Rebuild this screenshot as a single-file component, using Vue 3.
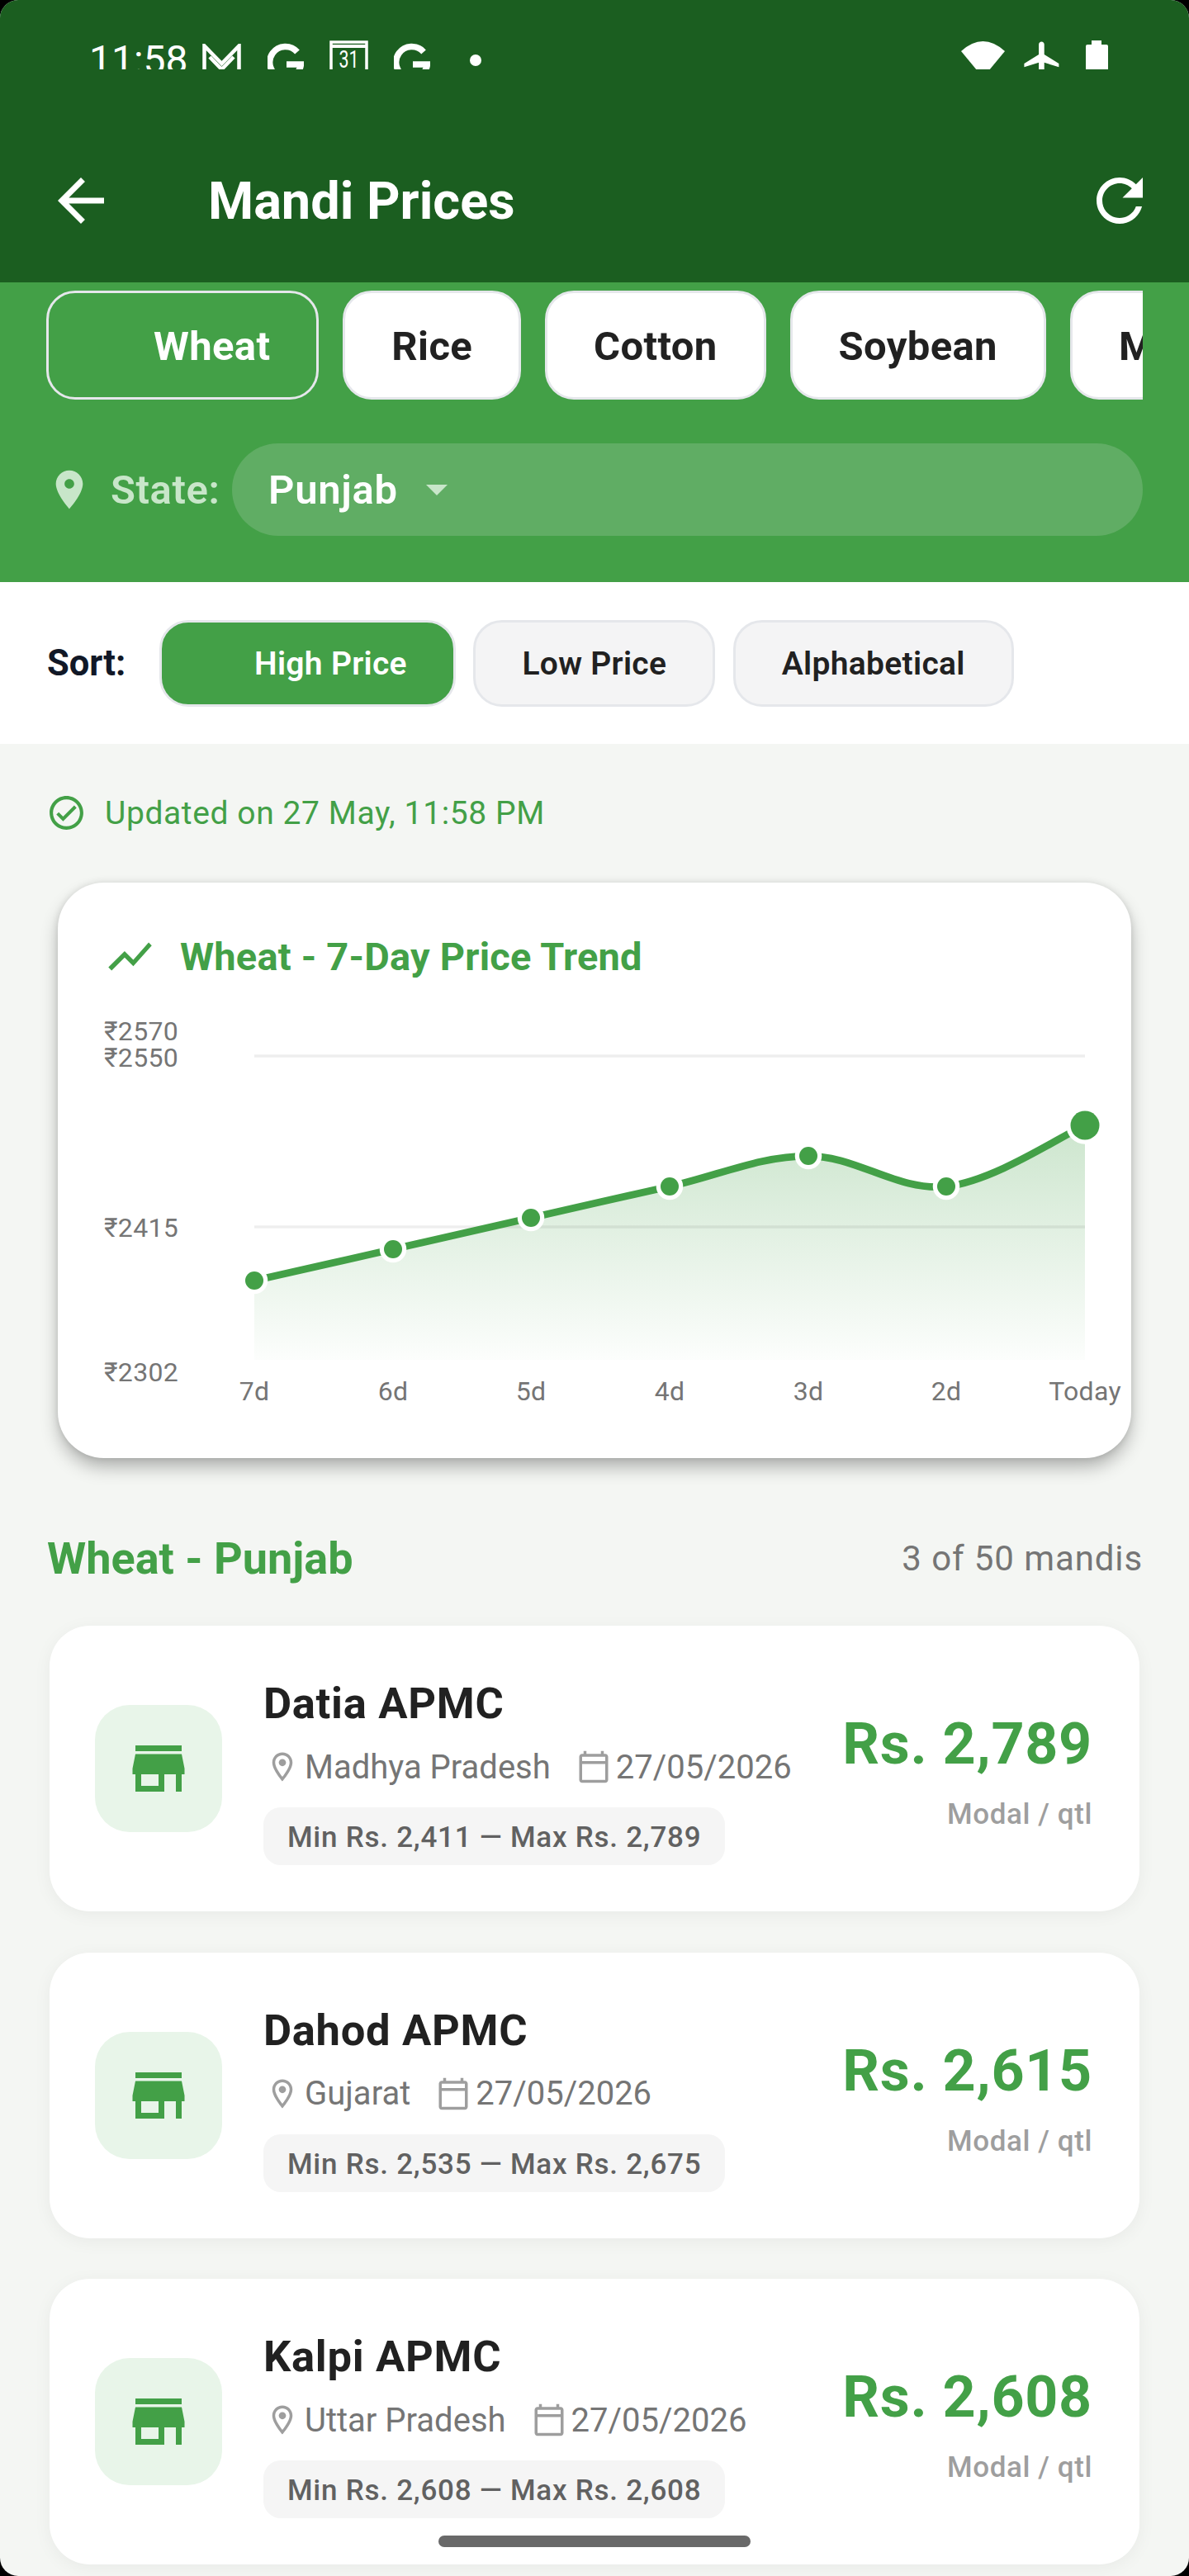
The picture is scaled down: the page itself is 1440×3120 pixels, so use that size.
<template>
  <div class="screen">
    <header class="top-bar">
      <div class="status-bar">
        <span class="time">11:58</span>
        <svg class="st-gmail" width="47" height="44" viewBox="0 0 47 44" fill="none" stroke="#fff" stroke-width="4.5">
          <path d="M2.5 44V2.5L23.5 24L44.5 2.5V44" />
          <path d="M9 16L23.5 31L38 16" />
        </svg>
        <svg class="st-g" width="44" height="46" viewBox="0 0 44 46" fill="none" stroke="#fff" stroke-width="7.5">
          <path d="M36 11A19 19 0 1 0 40.5 26H23" />
        </svg>
        <svg class="st-cal" width="47" height="50" viewBox="0 0 47 50" fill="none">
          <path d="M2 50V2H45V50" stroke="#fff" stroke-width="3.5" />
          <path d="M2 7H45" stroke="#fff" stroke-width="4" />
          <text class="st-cal-num" x="23.5" y="33" text-anchor="middle" textLength="24" lengthAdjust="spacingAndGlyphs">31</text>
        </svg>
        <svg class="st-g2" width="44" height="46" viewBox="0 0 44 46" fill="none" stroke="#fff" stroke-width="7.5">
          <path d="M36 11A19 19 0 1 0 40.5 26H23" />
        </svg>
        <span class="st-dot"></span>
        <svg class="st-wifi" width="53" height="44" viewBox="0 0 53 44" fill="#fff">
          <path d="M0 12Q26.5 -12 53 12L26.5 44Z" />
        </svg>
        <svg class="st-plane" width="53" height="53" viewBox="0 0 24 24" fill="#fff">
          <path d="M21 16v-2l-8-5V3.5c0-.83-.67-1.5-1.5-1.5S10 2.67 10 3.5V9l-8 5v2l8-2.5V19l-2 1.5V22l3.5-1 3.5 1v-1.5L13 19v-5.5l8 2.5z" />
        </svg>
        <svg class="st-battery" width="27" height="50" viewBox="0 0 27 50" fill="#fff">
          <path d="M7 0H19V5H25Q27 5 27 7V50H0V7Q0 5 2 5H7Z" />
        </svg>
      </div>
      <div class="app-bar">
        <svg class="bar-icon" width="84" height="84" viewBox="0 0 24 24" fill="#fff">
          <path d="M20 11H7.83l5.59-5.59L12 4l-8 8 8 8 1.41-1.41L7.83 13H20v-2z" />
        </svg>
        <h1 class="app-title">Mandi Prices</h1>
        <svg class="bar-icon refresh" width="84" height="84" viewBox="0 0 24 24" fill="#fff">
          <path d="M17.65 6.35C16.2 4.9 14.21 4 12 4c-4.42 0-7.99 3.58-7.99 8s3.57 8 7.99 8c3.73 0 6.84-2.55 7.73-6h-2.08c-.82 2.33-3.04 4-5.65 4-3.31 0-6-2.69-6-6s2.69-6 6-6c1.66 0 3.14.69 4.22 1.78L13 11h7V4l-2.35 2.35z" />
        </svg>
      </div>
    </header>

    <section class="filters">
      <div class="crop-row">
        <div v-for="c in crops" :key="c" class="crop-chip" :class="{ active: c === 'Wheat' }">{{ c }}</div>
      </div>
      <div class="state-row">
        <svg width="56" height="56" viewBox="0 0 24 24" fill="#c8e6c9">
          <path d="M12 2C8.13 2 5 5.13 5 9c0 5.25 7 13 7 13s7-7.75 7-13c0-3.87-3.13-7-7-7zm0 9.5c-1.38 0-2.5-1.12-2.5-2.5s1.12-2.5 2.5-2.5 2.5 1.12 2.5 2.5-1.12 2.5-2.5 2.5z" />
        </svg>
        <span class="state-label">State:</span>
        <div class="state-select">
          <span>Punjab</span>
          <i class="caret"></i>
        </div>
      </div>
    </section>

    <section class="sort-bar">
      <span class="sort-label">Sort:</span>
      <div v-for="s in sorts" :key="s" class="sort-chip" :class="{ active: s === 'High Price' }">{{ s }}</div>
    </section>

    <div class="updated">
      <svg width="49" height="49" viewBox="0 0 24 24" fill="#43a047">
        <path d="M16.59 7.58L10 14.17l-2.59-2.58L6 13l4 4 8-8zM12 2C6.48 2 2 6.48 2 12s4.48 10 10 10 10-4.48 10-10S17.52 2 12 2zm0 18c-4.42 0-8-3.58-8-8s3.58-8 8-8 8 3.58 8 8-3.58 8-8 8z" />
      </svg>
      <span>Updated on 27 May, 11:58 PM</span>
    </div>

    <section class="chart-card">
      <div class="chart-title">
        <svg width="63" height="63" viewBox="0 0 24 24" fill="#43a047">
          <path d="M3.5 18.49l6-6.01 4 4L22 6.92l-1.41-1.41-7.09 7.97-4-4L2 16.99z" />
        </svg>
        <span>Wheat - 7-Day Price Trend</span>
      </div>
      <svg class="chart" width="1300" height="576" viewBox="70 1190 1300 576">
        <defs>
          <linearGradient id="areaFill" x1="0" y1="0" x2="0" y2="1">
            <stop offset="0" stop-color="#43a047" stop-opacity="0.27" />
            <stop offset="1" stop-color="#43a047" stop-opacity="0.015" />
          </linearGradient>
        </defs>
        <path :d="areaPath" fill="url(#areaFill)" />
        <rect v-for="y in gridYs" :key="y" x="308" :y="y - 1.75" width="1006" height="3.5" fill="#000" fill-opacity="0.065" />
        <path :d="linePath" fill="none" stroke="#43a047" stroke-width="8.75" />
        <g v-for="(p, i) in points" :key="p.label">
          <circle :cx="p.x" :cy="p.y" :r="(i === points.length - 1 ? 17.5 : 11) + 5.25" fill="#fff" />
          <circle :cx="p.x" :cy="p.y" :r="i === points.length - 1 ? 17.5 : 11" fill="#43a047" />
          <text class="axis" :x="p.x" y="1696" text-anchor="middle">{{ p.label }}</text>
        </g>
        <text v-for="t in yTicks" :key="t.text" class="axis" x="126" :y="t.y">{{ t.text }}</text>
      </svg>
    </section>

    <div class="list-head">
      <h2>Wheat - Punjab</h2>
      <span>3 of 50 mandis</span>
    </div>

    <div class="mandi-list">
      <article v-for="m in mandis" :key="m.name" class="mandi-card">
        <div class="tile">
          <svg width="84" height="84" viewBox="0 0 24 24" fill="#43a047">
            <path d="M20 4H4v2h16V4zm1 10v-2l-1-5H4l-1 5v2h1v6h10v-6h4v6h2v-6h1zm-9 4H6v-4h6v4z" />
          </svg>
        </div>
        <div class="mandi-body">
          <div class="mandi-name">{{ m.name }}</div>
          <div class="mandi-meta">
            <svg width="42" height="42" viewBox="0 0 24 24" fill="#9e9e9e">
              <path d="M12 2C8.13 2 5 5.13 5 9c0 5.25 7 13 7 13s7-7.75 7-13c0-3.87-3.13-7-7-7zM7 9c0-2.76 2.24-5 5-5s5 2.24 5 5c0 2.88-2.88 7.19-5 9.88C9.92 16.21 7 11.85 7 9z" />
              <circle cx="12" cy="9" r="2.5" />
            </svg>
            <span class="meta-state">{{ m.state }}</span>
            <svg width="42" height="42" viewBox="0 0 24 24" fill="#9e9e9e">
              <path d="M20 3h-1V1h-2v2H7V1H5v2H4c-1.1 0-2 .9-2 2v16c0 1.1.9 2 2 2h16c1.1 0 2-.9 2-2V5c0-1.1-.9-2-2-2zm0 2v3H4V5h16zM4 21V10h16v11H4z" />
            </svg>
            <span class="meta-date">27/05/2026</span>
          </div>
          <div class="range">Min Rs. {{ m.min }} — Max Rs. {{ m.max }}</div>
        </div>
        <div class="mandi-price">
          <div class="price">Rs. {{ m.modal }}</div>
          <div class="unit">Modal / qtl</div>
        </div>
      </article>
    </div>

    <div class="home-bar"></div>
  </div>
</template>

<script setup>
const crops = ['Wheat', 'Rice', 'Cotton', 'Soybean', 'Maize']
const sorts = ['High Price', 'Low Price', 'Alphabetical']

const points = [
  { label: '7d', x: 308, y: 1551 },
  { label: '6d', x: 476, y: 1513 },
  { label: '5d', x: 643, y: 1475 },
  { label: '4d', x: 811, y: 1437 },
  { label: '3d', x: 979, y: 1400 },
  { label: '2d', x: 1146, y: 1437 },
  { label: 'Today', x: 1314, y: 1363 }
]
const gridYs = [1279, 1486]
const yTicks = [
  { text: '₹2570', y: 1260 },
  { text: '₹2550', y: 1292 },
  { text: '₹2415', y: 1498 },
  { text: '₹2302', y: 1673 }
]

// smooth curve through the points, same idea as a chart lib's curved line
const smooth = 0.35
const tangent = (i) => {
  const a = points[Math.max(i - 1, 0)]
  const b = points[Math.min(i + 1, points.length - 1)]
  return { x: ((b.x - a.x) / 2) * smooth, y: ((b.y - a.y) / 2) * smooth }
}
let curve = `M${points[0].x} ${points[0].y}`
for (let i = 0; i < points.length - 1; i++) {
  const t0 = tangent(i)
  const t1 = tangent(i + 1)
  const p0 = points[i]
  const p1 = points[i + 1]
  curve += `C${p0.x + t0.x} ${p0.y + t0.y} ${p1.x - t1.x} ${p1.y - t1.y} ${p1.x} ${p1.y}`
}
const linePath = curve
const areaPath = `${curve}L1314 1647L308 1647Z`

const mandis = [
  { name: 'Datia APMC', state: 'Madhya Pradesh', min: '2,411', max: '2,789', modal: '2,789' },
  { name: 'Dahod APMC', state: 'Gujarat', min: '2,535', max: '2,675', modal: '2,615' },
  { name: 'Kalpi APMC', state: 'Uttar Pradesh', min: '2,608', max: '2,608', modal: '2,608' }
]
</script>

<style>
html, body { background: #000; margin: 0; }
</style>

<style scoped>
.screen {
  position: relative;
  width: 1440px;
  height: 3120px;
  overflow: hidden;
  border-radius: 22px;
  background: #f4f6f3;
  font-family: Roboto, "Noto Sans", sans-serif;
}

/* header */
.top-bar { height: 342px; background: #1b5e20; }
.status-bar {
  display: flex;
  align-items: flex-start;
  height: 84px;
  overflow: hidden;
  padding-left: 108px;
  box-sizing: border-box;
}
.time { margin-top: 49px; font-size: 48px; line-height: 48px; color: #fff; width: 119px; white-space: nowrap; }
.st-gmail { margin: 53px 0 0 18px; flex-shrink: 0; }
.st-g { margin: 52px 0 0 32px; flex-shrink: 0; }
.st-cal { margin: 49px 0 0 31px; flex-shrink: 0; }
.st-cal-num { font-size: 29px; fill: #fff; font-family: Roboto, sans-serif; }
.st-g2 { margin: 52px 0 0 31px; flex-shrink: 0; }
.st-dot { margin: 66px 0 0 48px; width: 14px; height: 14px; border-radius: 50%; background: #fff; flex-shrink: 0; }
.st-wifi { margin: 50px 0 0 581px; flex-shrink: 0; }
.st-plane { margin: 46px 0 0 19px; flex-shrink: 0; }
.st-battery { margin: 49px 0 0 26px; flex-shrink: 0; }

.app-bar { display: flex; align-items: center; height: 84px; margin-top: 117px; padding: 0 42px 0 56px; }
.bar-icon { flex-shrink: 0; }
.app-title { margin: 2px 0 0 112px; font-size: 63px; line-height: 84px; font-weight: 700; color: #fff; }
.refresh { margin-left: auto; }

/* crop + state filters */
.filters { height: 363px; background: #43a047; padding: 10px 56px 0; box-sizing: border-box; }
.crop-row { display: flex; gap: 29px; overflow: hidden; }
.crop-chip {
  flex-shrink: 0;
  height: 132px;
  padding: 2px 56px 0;
  display: flex;
  align-items: center;
  box-sizing: border-box;
  background: #fff;
  border: 3.5px solid #e5e7eb;
  border-radius: 35px;
  font-size: 49px;
  font-weight: 700;
  letter-spacing: 0.35px;
  color: #212121;
}
.crop-chip.active { background: transparent; color: #fff; padding-left: 127px; }

.state-row { display: flex; align-items: center; height: 112px; margin-top: 53px; }
.state-label { margin-left: 22px; width: 147px; font-size: 49px; font-weight: 600; letter-spacing: 0.6px; color: #c8e6c9; }
.state-select {
  flex: 1;
  display: flex;
  align-items: center;
  height: 112px;
  padding-left: 44px;
  border-radius: 56px;
  background: #60ad64;
  font-size: 49px;
  font-weight: 600;
  letter-spacing: 0.7px;
  color: #fff;
}
.caret {
  margin-left: 34px;
  width: 0;
  height: 0;
  border-left: 13px solid transparent;
  border-right: 13px solid transparent;
  border-top: 13px solid #c8e6c9;
}

/* sort */
.sort-bar { display: flex; align-items: center; height: 196px; padding-left: 57px; background: #fff; }
.sort-label { width: 136px; font-size: 43.5px; font-weight: 700; color: #111827; }
.sort-chip {
  display: flex;
  align-items: center;
  height: 105px;
  margin-right: 21.5px;
  padding: 2px 56px 0;
  box-sizing: border-box;
  background: #f4f4f5;
  border: 3.5px solid #e5e7eb;
  border-radius: 35px;
  font-size: 39px;
  font-weight: 600;
  letter-spacing: 0.3px;
  color: #212121;
}
.sort-chip.active { background: #43a047; color: #fff; padding-left: 112px; }

.updated {
  display: flex;
  align-items: center;
  gap: 22px;
  height: 49px;
  margin: 59px 0 0 56px;
  font-size: 39px;
  letter-spacing: 0.6px;
  color: #43a047;
}

/* chart */
.chart-card {
  margin: 60px 70px 0;
  height: 697px;
  padding-top: 58px;
  box-sizing: border-box;
  background: #fff;
  border-radius: 56px;
  box-shadow: 0 12px 22px -2px rgba(0, 0, 0, 0.3), 0 0 8px rgba(0, 0, 0, 0.1);
}
.chart-title {
  display: flex;
  align-items: center;
  gap: 29px;
  height: 63px;
  padding-left: 56px;
  font-size: 47px;
  font-weight: 700;
  letter-spacing: 0.2px;
  color: #43a047;
}
.chart { display: block; }
.axis { font-size: 32px; letter-spacing: 0.3px; fill: #757575; font-family: Roboto, sans-serif; }

/* list */
.list-head {
  display: flex;
  align-items: center;
  justify-content: space-between;
  height: 60px;
  margin-top: 91px;
  padding: 0 56px 0 57px;
}
.list-head h2 { margin: 0; font-size: 54px; font-weight: 700; color: #43a047; }
.list-head span { font-size: 42px; letter-spacing: 0.9px; color: #757575; }

.mandi-list { display: flex; flex-direction: column; gap: 49.5px; margin: 52px 60px 0; }
.mandi-card {
  display: flex;
  height: 346px;
  padding: 0 57px 0 55px;
  box-sizing: border-box;
  background: #fff;
  border-radius: 49px;
  box-shadow: 0 4px 21px rgba(0, 0, 0, 0.05);
}
.tile {
  display: flex;
  align-items: center;
  justify-content: center;
  flex-shrink: 0;
  align-self: center;
  width: 154px;
  height: 154px;
  border-radius: 42px;
  background: #e8f5e9;
}
.mandi-body { margin-left: 50px; padding-top: 64px; }
.mandi-name { font-size: 52.5px; line-height: 60px; font-weight: 700; letter-spacing: 0.7px; color: #212121; }
.mandi-meta {
  display: flex;
  align-items: center;
  height: 42px;
  margin-top: 26px;
  padding-left: 2px;
  font-size: 40px;
  color: #757575;
  white-space: nowrap;
}
.meta-state { margin: 0 31px 0 6px; }
.meta-date { margin-left: 6px; }
.range {
  display: inline-block;
  margin-top: 28px;
  padding: 3px 29px 0;
  border-radius: 21px;
  background: #f5f5f5;
  font-size: 35px;
  line-height: 67px;
  font-weight: 500;
  letter-spacing: 0.75px;
  color: #616161;
  white-space: nowrap;
}
.mandi-price { margin-left: auto; padding-top: 101px; text-align: right; }
.price { font-size: 70px; line-height: 84px; font-weight: 700; letter-spacing: 0.7px; color: #43a047; white-space: nowrap; }
.unit { margin-top: 22px; font-size: 35px; line-height: 44px; font-weight: 500; letter-spacing: 0.6px; color: #9e9e9e; }

.home-bar {
  position: absolute;
  left: 531px;
  top: 3071px;
  width: 378px;
  height: 14px;
  border-radius: 7px;
  background: #696969;
}
</style>
